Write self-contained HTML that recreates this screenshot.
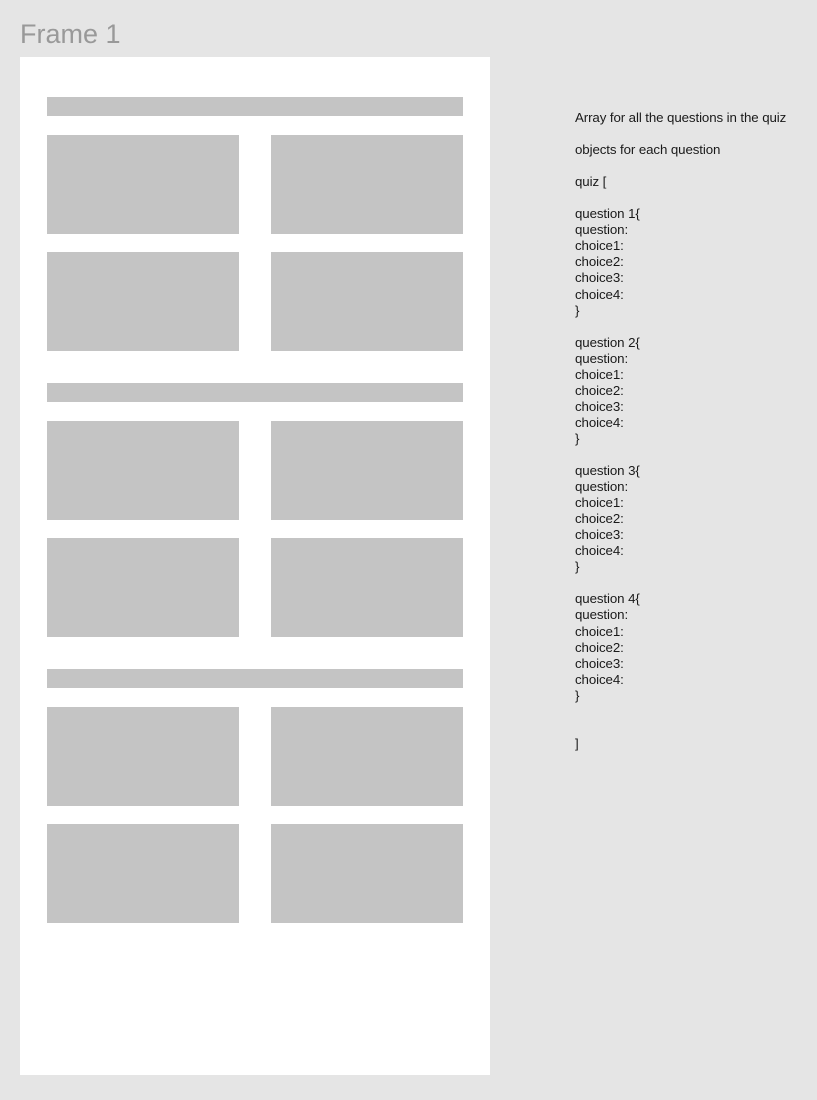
<!DOCTYPE html>
<html><head><style>
body{margin:0;width:817px;height:1100px;background:#e5e5e5;position:relative;overflow:hidden;font-family:"Liberation Sans",sans-serif}
.t{position:absolute;left:20px;top:19px;font-size:27px;color:#999;}
.f{position:absolute;left:20px;top:57px;width:470px;height:1018px;background:#fff}
.g{position:absolute;background:#c4c4c4}
pre{position:absolute;left:575px;top:110px;margin:0;font-family:"Liberation Sans",sans-serif;font-size:13.3px;line-height:16.05px;color:#1a1a1a;letter-spacing:-0.1px}
</style></head><body>
<div class="t">Frame 1</div>
<div class="f"></div>
<div class="g" style="left:47px;top:97px;width:416px;height:19px"></div>
<div class="g" style="left:47px;top:135px;width:192px;height:99px"></div>
<div class="g" style="left:271px;top:135px;width:192px;height:99px"></div>
<div class="g" style="left:47px;top:252px;width:192px;height:99px"></div>
<div class="g" style="left:271px;top:252px;width:192px;height:99px"></div>
<div class="g" style="left:47px;top:383px;width:416px;height:19px"></div>
<div class="g" style="left:47px;top:421px;width:192px;height:99px"></div>
<div class="g" style="left:271px;top:421px;width:192px;height:99px"></div>
<div class="g" style="left:47px;top:538px;width:192px;height:99px"></div>
<div class="g" style="left:271px;top:538px;width:192px;height:99px"></div>
<div class="g" style="left:47px;top:669px;width:416px;height:19px"></div>
<div class="g" style="left:47px;top:707px;width:192px;height:99px"></div>
<div class="g" style="left:271px;top:707px;width:192px;height:99px"></div>
<div class="g" style="left:47px;top:824px;width:192px;height:99px"></div>
<div class="g" style="left:271px;top:824px;width:192px;height:99px"></div>
<pre>Array for all the questions in the quiz

objects for each question

quiz [

question 1{
question:
choice1:
choice2:
choice3:
choice4:
}

question 2{
question:
choice1:
choice2:
choice3:
choice4:
}

question 3{
question:
choice1:
choice2:
choice3:
choice4:
}

question 4{
question:
choice1:
choice2:
choice3:
choice4:
}


]</pre>
</body></html>
